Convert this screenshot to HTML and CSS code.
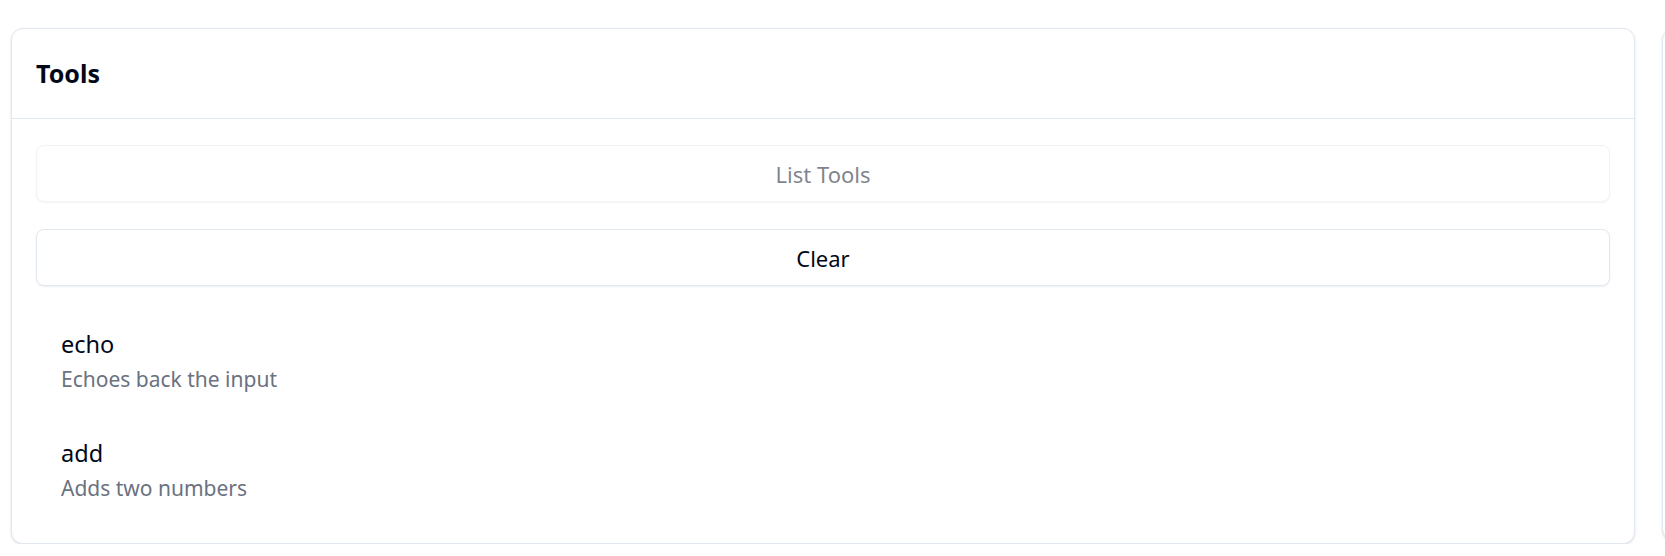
FILE: index.html
```html
<!DOCTYPE html>
<html lang="en">
<head>
<meta charset="utf-8">
<title>Tools</title>
<link rel="stylesheet" href="styles.css">
</head>
<body>
<div class="page">
  <section class="card tools-card">
    <header class="card-header">
      <h2 class="card-title">Tools</h2>
    </header>
    <div class="card-body">
      <div class="actions">
        <button class="btn btn-disabled" disabled>List Tools</button>
        <button class="btn">Clear</button>
      </div>
      <ul class="tool-list">
        <li class="tool-item">
          <div class="tool-name">echo</div>
          <div class="tool-desc">Echoes back the input</div>
        </li>
        <li class="tool-item">
          <div class="tool-name">add</div>
          <div class="tool-desc">Adds two numbers</div>
        </li>
      </ul>
    </div>
  </section>
  <section class="card next-card"></section>
</div>
</body>
</html>
```
FILE: styles.css
```css
* { box-sizing: border-box; }
html, body {
  margin: 0;
  padding: 0;
  background: #ffffff;
  overflow: hidden;
}
body {
  font-family: "Noto Sans", "Open Sans", sans-serif;
  color: #020817;
}
.page {
  display: flex;
  gap: 27px;
  padding: 28px 0 0 11px;
  width: 2400px;
}
.card {
  background: #ffffff;
  border: 1px solid #e2e8f0;
  border-radius: 12px;
  box-shadow: 0 1px 3px rgba(15, 23, 42, 0.10), 0 1px 2px -1px rgba(15, 23, 42, 0.10);
}
.tools-card {
  width: 1624px;
  flex: 0 0 1624px;
}
.next-card {
  width: 600px;
  height: 513px;
  flex: 0 0 600px;
}
.card-header {
  padding: 24px 24px;
  border-bottom: 1px solid #e2e8f0;
}
.card-title {
  margin: 0;
  font-size: 25px;
  line-height: 41px;
  font-weight: 700;
  color: #020817;
}
.card-body {
  padding: 26px 24px 24px;
}
.actions {
  display: flex;
  flex-direction: column;
  gap: 27px;
}
.btn {
  display: block;
  width: 100%;
  height: 57px;
  border: 1px solid #e2e8f0;
  border-radius: 8px;
  background: #ffffff;
  font-family: inherit;
  font-size: 22px;
  color: #020817;
  box-shadow: 0 1px 2px rgba(15, 23, 42, 0.07);
  cursor: pointer;
}
.btn-disabled {
  opacity: 0.5;
  cursor: default;
}
.tool-list {
  list-style: none;
  margin: 26px 0 0;
  padding: 0;
  display: flex;
  flex-direction: column;
  gap: 11px;
}
.tool-item {
  padding: 14px 25px;
}
.tool-name {
  font-size: 23.5px;
  line-height: 36px;
  color: #020817;
}
.tool-desc {
  font-size: 21px;
  line-height: 34px;
  color: #6b7280;
}
```
